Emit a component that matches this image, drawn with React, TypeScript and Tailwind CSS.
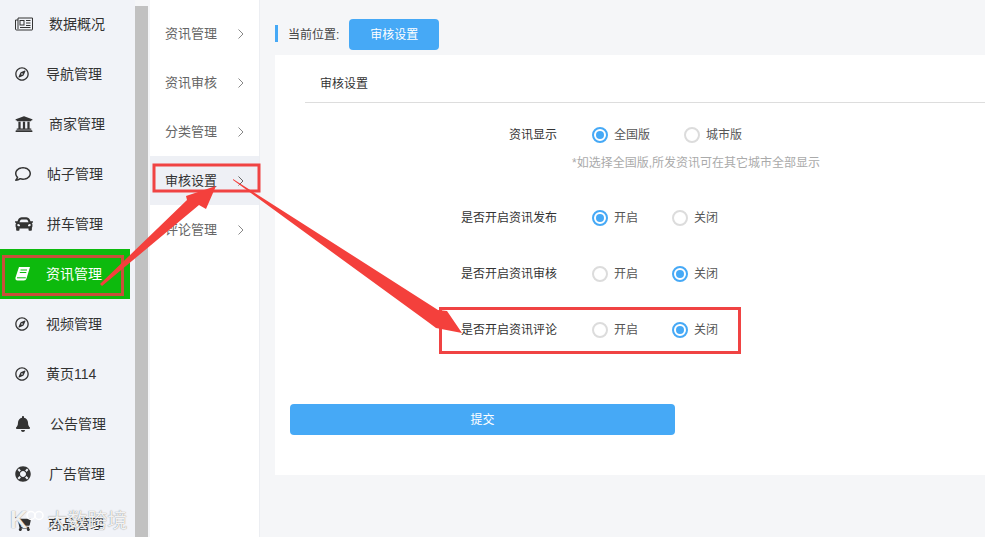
import { FaRegCompass, FaUniversity, FaRegComment, FaCar, FaBell, FaLifeRing, FaShoppingCart } from "react-icons/fa";
import type { ComponentType } from "react";

function NewsIcon({ className }: { className?: string }) {
  return (
    <svg className={className} viewBox="0 0 18 13" fill="none" stroke="currentColor" strokeWidth="1">
      <path d="M3 .5h14.5v11.5a.5.5 0 0 1-.5.5H1.500A1 1 0 0 1 .5 11.500V2.500h2.500" />
      <path d="M3 .5v11" />
      <rect x="5" y="3" width="4" height="4.500" />
      <path d="M11 3h4.500M11 5.500h4.500M11 8h4.500M5 10h10.500" />
    </svg>
  );
}

function BookIcon({ className }: { className?: string }) {
  return (
    <svg className={className} viewBox="0 0 15 14">
      <path d="M4 0h11l-3.500 11.500Q11 13.500 9 13.500H2.500Q0 13.500.5 10.500Z" fill="#fff" />
      <path d="M5.500 3h6.500M4.800 5.500h6.500M2 10.800h8.800" stroke="#0dba0d" strokeWidth="1" fill="none" />
    </svg>
  );
}

const NAV: { label: string; icon: ComponentType<{ className?: string }>; size: string; gap: string; active?: boolean }[] = [
  { label: "数据概况", icon: NewsIcon, size: "w-[18px] h-[14px]", gap: "gap-[16px]" },
  { label: "导航管理", icon: FaRegCompass, size: "w-[14px] h-[14px]", gap: "gap-[17px]" },
  { label: "商家管理", icon: FaUniversity, size: "w-[18px] h-[18px]", gap: "gap-[16px]" },
  { label: "帖子管理", icon: FaRegComment, size: "w-[16px] h-[16px]", gap: "gap-[16px]" },
  { label: "拼车管理", icon: FaCar, size: "w-[18px] h-[18px]", gap: "gap-[14px]" },
  { label: "资讯管理", icon: BookIcon, size: "w-[15px] h-[14px]", gap: "gap-[16px]", active: true },
  { label: "视频管理", icon: FaRegCompass, size: "w-[14px] h-[14px]", gap: "gap-[17px]" },
  { label: "黄页114", icon: FaRegCompass, size: "w-[14px] h-[14px]", gap: "gap-[17px]" },
  { label: "公告管理", icon: FaBell, size: "w-[16px] h-[16px]", gap: "gap-[19px]" },
  { label: "广告管理", icon: FaLifeRing, size: "w-[16px] h-[16px]", gap: "gap-[18px]" },
  { label: "商品管理", icon: FaShoppingCart, size: "w-[16px] h-[16px]", gap: "gap-[17px]" },
];

const SUB = ["资讯管理", "资讯审核", "分类管理", "审核设置", "评论管理"];

const ROWS = [
  { label: "是否开启资讯发布", on: true, top: "mt-[37px]" },
  { label: "是否开启资讯审核", on: false, top: "mt-[36px]" },
  { label: "是否开启资讯评论", on: false, top: "mt-[36px]" },
];

function Radio({ checked, label, className }: { checked: boolean; label: string; className?: string }) {
  return (
    <span className={`flex items-center gap-[6px] text-xs text-[#555] ${className || ""}`}>
      {checked ? (
        <span className="flex h-4 w-4 items-center justify-center rounded-full border-2 border-[#46a9f6] bg-white">
          <span className="h-2 w-2 rounded-full bg-[#46a9f6]" />
        </span>
      ) : (
        <span className="h-4 w-4 rounded-full border-2 border-[#dcdcdc] bg-white" />
      )}
      {label}
    </span>
  );
}

function Chevron({ dark }: { dark?: boolean }) {
  return (
    <svg width="6" height="10" viewBox="0 0 6 10" fill="none" stroke={dark ? "#666" : "#888"} strokeWidth="1">
      <path d="M.5.5 5 5 .5 9.5" />
    </svg>
  );
}

export default function App() {
  return (
    <div className="relative flex h-[537px] w-[985px] overflow-hidden bg-[#f5f6f8] font-['Liberation_Sans','Noto_Sans_CJK_SC',sans-serif]">
      {/* left nav */}
      <aside className="w-[135px] shrink-0 bg-[#f1f3f8]">
        <div className="-mt-px w-[130px]">
          {NAV.map((n) => {
            const Icon = n.icon;
            return (
              <div
                key={n.label}
                className={`flex h-[50px] items-center pl-[15px] ${n.gap} text-sm ${n.active ? "bg-[#0dba0d] text-white" : "text-[#333]"}`}
              >
                <Icon className={`${n.size} shrink-0 ${n.active ? "text-white" : "text-[#333]"}`} />
                <span>{n.label}</span>
              </div>
            );
          })}
        </div>
      </aside>

      {/* scrollbar */}
      <div className="w-[15px] shrink-0 pr-[2px] pt-[6px]">
        <div className="h-full bg-[#c1c1c1]" />
      </div>

      {/* sub menu */}
      <nav className="w-[110px] shrink-0 border-r border-[#eceef2] bg-white pt-[9px]">
        {SUB.map((s, i) => (
          <div
            key={s}
            className={`flex h-[49px] items-center justify-between pl-[15px] pr-[15px] pt-px ${i === 3 ? "bg-[#eef0f5] text-[#333]" : "text-[#666]"}`}
          >
            <span className="text-[13px]">{s}</span>
            <Chevron dark={i === 3} />
          </div>
        ))}
      </nav>

      {/* main */}
      <main className="min-w-0 flex-1 pl-[15px]">
        <div className="flex h-[55px] items-center pt-[14px]">
          <span className="mb-[2px] h-[17px] w-[3px] bg-[#46a9f6]" />
          <span className="ml-[10px] text-xs text-[#444]">当前位置:</span>
          <span className="ml-[10px] flex h-[31px] w-[90px] items-center justify-center rounded-[4px] bg-[#46a9f6] text-xs text-white">
            审核设置
          </span>
        </div>

        <section className="h-[420px] bg-white">
          <div className="ml-[30px] flex h-[48px] items-center border-b border-[#dddddd] pl-[15px] pt-[10px] text-xs text-[#333]">
            审核设置
          </div>

          <div className="mt-[21px] flex h-[22px] items-center">
            <span className="w-[282px] text-right text-xs text-[#333]">资讯显示</span>
            <Radio checked label="全国版" className="ml-[35px] w-[92px]" />
            <Radio checked={false} label="城市版" />
          </div>
          <p className="ml-[297px] mt-[9px] text-xs leading-[16px] text-[#aaaaaa]">
            *如选择全国版,所发资讯可在其它城市全部显示
          </p>

          {ROWS.map((r) => (
            <div key={r.label} className={`flex h-[20px] items-center ${r.top}`}>
              <span className="w-[282px] text-right text-xs text-[#333]">{r.label}</span>
              <Radio checked={r.on} label="开启" className="ml-[35px] w-[80px]" />
              <Radio checked={!r.on} label="关闭" />
            </div>
          ))}

          <button className="ml-[15px] mt-[64px] block h-[31px] w-[385px] rounded-[4px] bg-[#46a9f6] text-xs text-white">
            提交
          </button>
        </section>
      </main>

      {/* red annotations drawn over the screenshot */}
      <svg className="pointer-events-none absolute left-0 top-0" width="985" height="537" viewBox="0 0 985 537">
        <rect x="3.500" y="256.500" width="119" height="38" fill="none" stroke="#c9503a" strokeWidth="3" />
        <rect x="154" y="165" width="105" height="26" fill="none" stroke="#f04343" strokeWidth="3" />
        <rect x="440.500" y="308.500" width="299" height="44" fill="none" stroke="#f04343" strokeWidth="3" />
        <polygon points="100,284 187,200 186,196 216,186 206,209 199,205 102,286" fill="#f4403c" />
        <polygon points="233,179 438,310 447,311 462,333 436,328 428,322 233,180" fill="#f4403c" />
      </svg>

      {/* watermark */}
      <div className="pointer-events-none absolute left-[10px] top-[506px] flex items-end text-white/90 [text-shadow:0_0_1px_rgba(90,90,90,0.9)]">
        <span className="text-[24px] font-bold leading-[28px]">K</span>
        <svg className="mb-[13px] ml-[-1px]" width="18" height="11" viewBox="0 0 18 11" fill="none" stroke="#ffffff" strokeWidth="1.500">
          <circle cx="5" cy="5.500" r="4" />
          <circle cx="13" cy="5.500" r="4" />
        </svg>
        <span className="ml-[3px] text-[20px] leading-[26px]">大数跨境</span>
      </div>
    </div>
  );
}
